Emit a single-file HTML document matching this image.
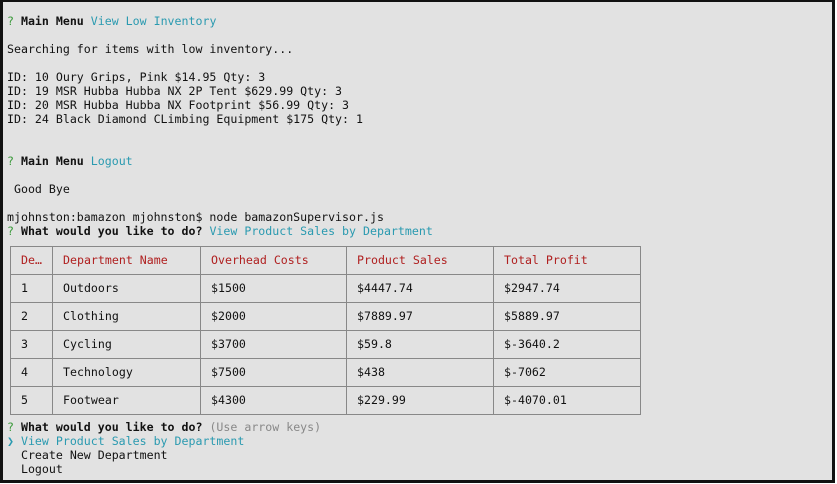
<!DOCTYPE html>
<html><head><meta charset="utf-8"><style>
html,body{margin:0;padding:0}
body{width:837px;height:484px;background:#fff;position:relative;overflow:hidden;font-family:"DejaVu Sans Mono","Liberation Mono",monospace;font-size:11.6px;color:#111}
#t{position:absolute;left:0;top:0;width:829px;height:478px;border:3px solid #111;border-top-width:2px;background:#e2e2e2}
.l{position:absolute;left:7px;white-space:pre;line-height:14px}
b{font-weight:bold}
.g{color:#3a9a3a}.c{color:#2a9ab0}.m{color:#888}
table{position:absolute;left:10px;top:246px;border-collapse:collapse}
td{border:1px solid #888;height:28px;padding:0 0 2px 10px;white-space:pre;line-height:14px;box-sizing:border-box}
tr.h td{color:#b02020}
</style></head><body><div id="t"></div>
<div class="l" style="top:14px"><span class="g">?</span> <b>Main Menu</b> <span class="c">View Low Inventory</span></div>
<div class="l" style="top:42px">Searching for items with low inventory...</div>
<div class="l" style="top:70px">ID: 10 Oury Grips, Pink $14.95 Qty: 3</div>
<div class="l" style="top:84px">ID: 19 MSR Hubba Hubba NX 2P Tent $629.99 Qty: 3</div>
<div class="l" style="top:98px">ID: 20 MSR Hubba Hubba NX Footprint $56.99 Qty: 3</div>
<div class="l" style="top:112px">ID: 24 Black Diamond CLimbing Equipment $175 Qty: 1</div>
<div class="l" style="top:154px"><span class="g">?</span> <b>Main Menu</b> <span class="c">Logout</span></div>
<div class="l" style="top:182px"> Good Bye</div>
<div class="l" style="top:210px">mjohnston:bamazon mjohnston$ node bamazonSupervisor.js</div>
<div class="l" style="top:224px"><span class="g">?</span> <b>What would you like to do?</b> <span class="c">View Product Sales by Department</span></div>
<table>
<tr class="h"><td style="width:42px">De…</td><td style="width:148px">Department Name</td><td style="width:146px">Overhead Costs</td><td style="width:147px">Product Sales</td><td style="width:147px">Total Profit</td></tr>
<tr><td>1</td><td>Outdoors</td><td>$1500</td><td>$4447.74</td><td>$2947.74</td></tr>
<tr><td>2</td><td>Clothing</td><td>$2000</td><td>$7889.97</td><td>$5889.97</td></tr>
<tr><td>3</td><td>Cycling</td><td>$3700</td><td>$59.8</td><td>$-3640.2</td></tr>
<tr><td>4</td><td>Technology</td><td>$7500</td><td>$438</td><td>$-7062</td></tr>
<tr><td>5</td><td>Footwear</td><td>$4300</td><td>$229.99</td><td>$-4070.01</td></tr>
</table>
<div class="l" style="top:420px"><span class="g">?</span> <b>What would you like to do?</b> <span class="m">(Use arrow keys)</span></div>
<div class="l c" style="top:434px">❯ View Product Sales by Department</div>
<div class="l" style="top:448px">  Create New Department</div>
<div class="l" style="top:462px">  Logout</div>
</body></html>
